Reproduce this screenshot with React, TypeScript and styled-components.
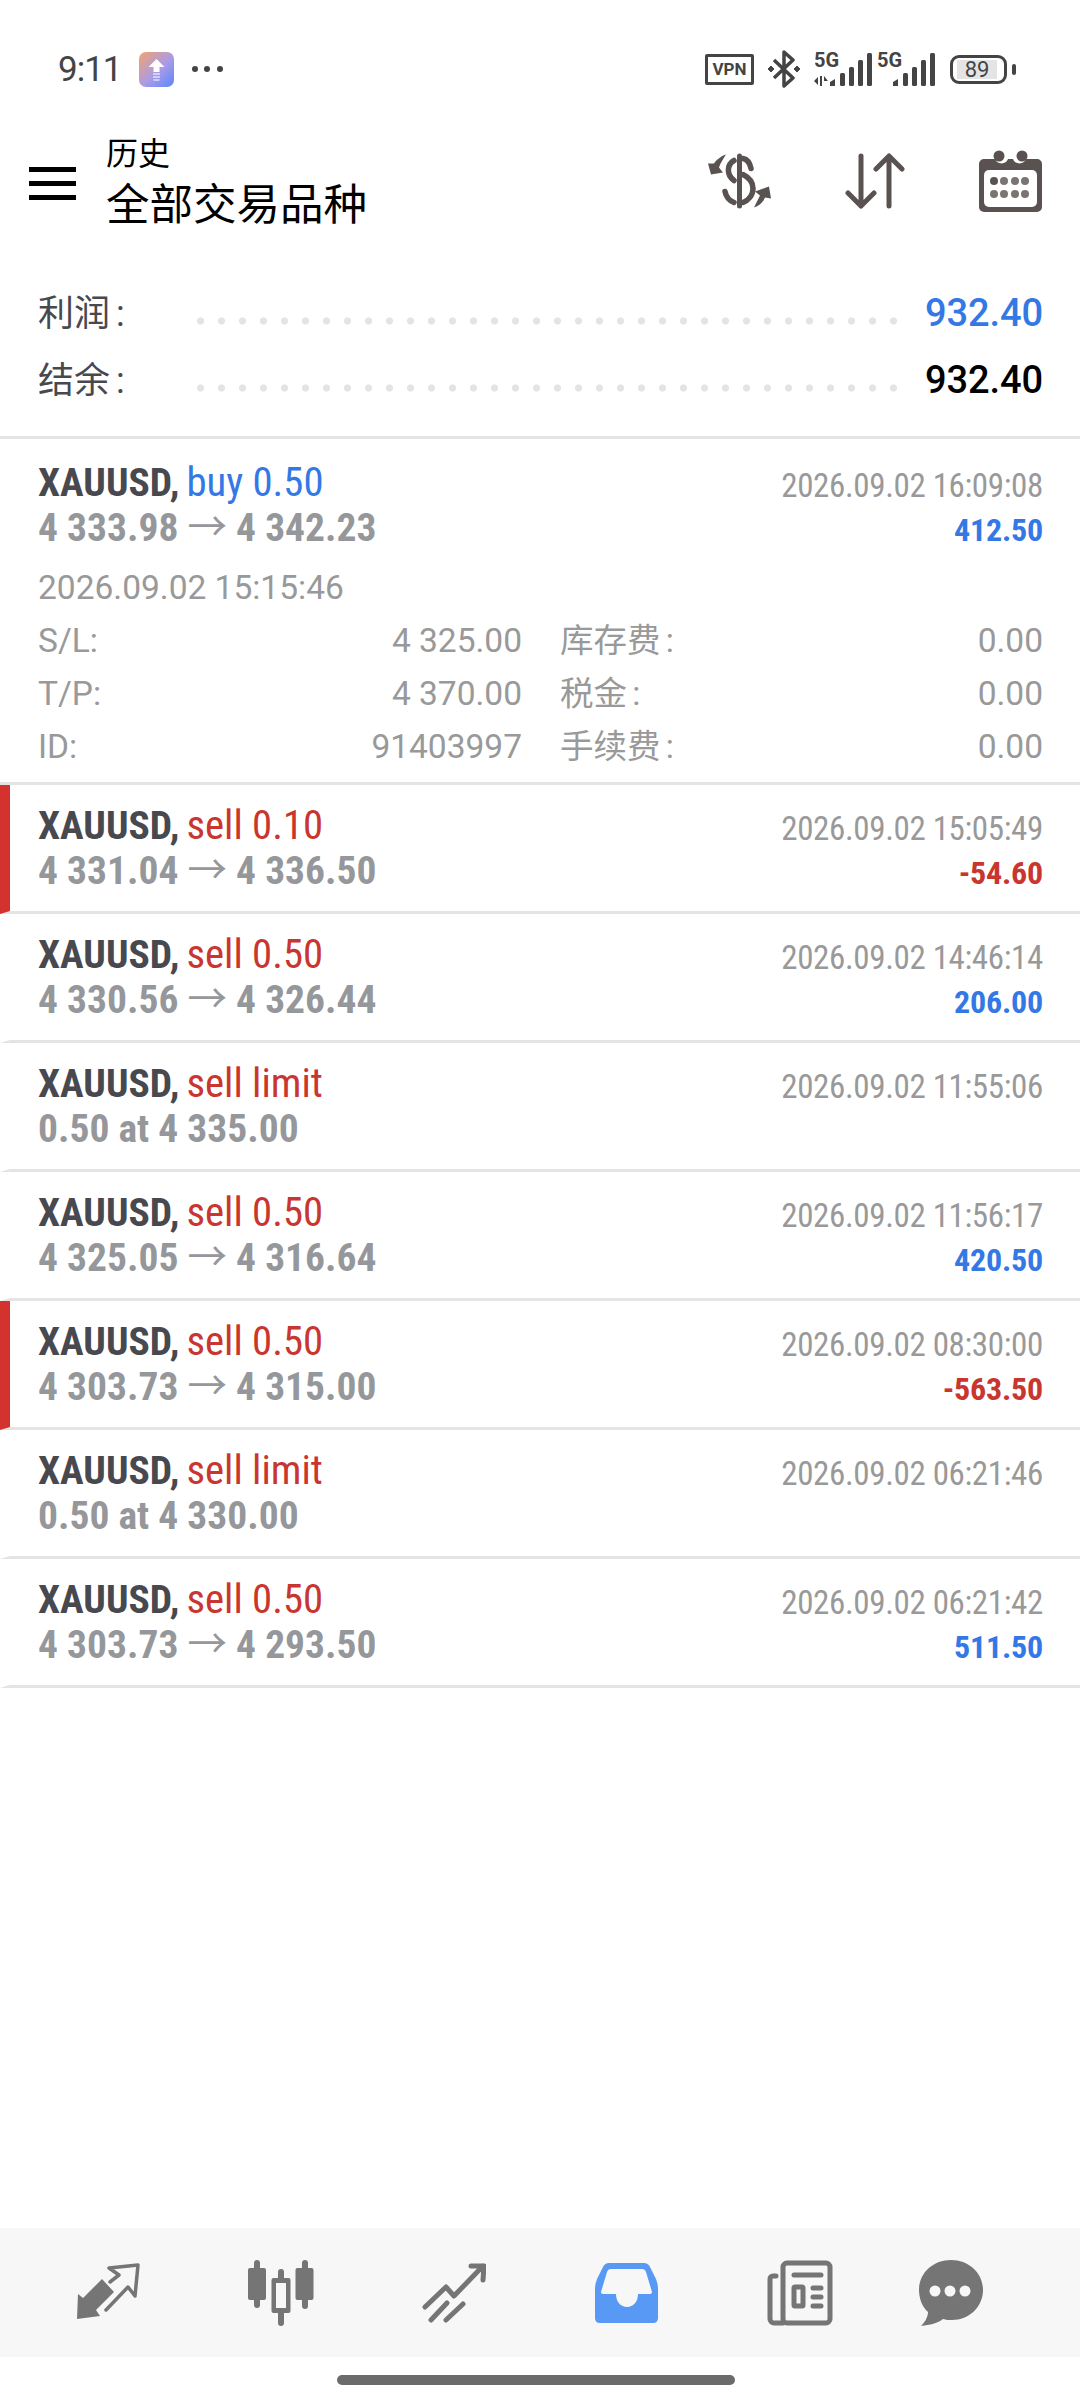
import React from "react";
import styled, { createGlobalStyle } from "styled-components";

const GlobalStyle = createGlobalStyle`
  html, body { margin: 0; padding: 0; background: #fff; }
  body { font-family: Roboto, "Noto Sans CJK SC", sans-serif; }
`;

const narrow = `"Roboto Condensed", "Liberation Sans Narrow", Roboto, "Noto Sans CJK SC", sans-serif`;

const Page = styled.div`
  width: 1080px;
  height: 2400px;
  display: flex;
  flex-direction: column;
  overflow: hidden;
  background: #fff;
`;

const StatusBar = styled.div`
  height: 110px;
  box-sizing: border-box;
  padding: 28px 64px 0 58px;
  display: flex;
  align-items: center;
  justify-content: space-between;
  color: #444;
`;

const StatusLeft = styled.div`
  display: flex;
  align-items: center;
  gap: 17px;
`;

const Time = styled.span`
  font-size: 35px;
  letter-spacing: -1px;
  color: #444;
`;

const StatusRight = styled.div`
  display: flex;
  align-items: center;
  gap: 13px;
`;

const VpnBox = styled.span`
  width: 49px;
  height: 31px;
  box-sizing: border-box;
  border: 3px solid #444;
  border-radius: 2px;
  font-size: 17px;
  font-weight: 700;
  line-height: 25px;
  text-align: center;
`;

const Signal = styled.span`
  position: relative;
  display: block;
  width: 60px;
  height: 33px;
  & + & {
    margin-left: -10px;
  }
`;

const FiveG = styled.span`
  position: absolute;
  left: 0;
  top: -4px;
  font-size: 20px;
  font-weight: 700;
  line-height: 22px;
`;

const Battery = styled.span`
  width: 57px;
  height: 29px;
  box-sizing: border-box;
  border: 3px solid #444;
  border-radius: 9px;
  padding: 2px 7px 2px 4px;
  display: flex;
`;

const BatteryFill = styled.span`
  flex: 1;
  background: #e4e4e4;
  font-size: 22px;
  line-height: 19px;
  text-align: center;
`;

const BatteryNub = styled.span`
  width: 4px;
  height: 11px;
  margin-left: -8px;
  border-radius: 2px;
  background: #444;
`;

const Header = styled.div`
  height: 160px;
  box-sizing: border-box;
  padding: 24px 38px 0 29px;
  display: flex;
  align-items: flex-start;
`;

const Burger = styled.div`
  width: 47px;
  margin-top: 33px;
  display: flex;
  flex-direction: column;
  gap: 9px;
  span {
    height: 5px;
    background: #000;
  }
`;

const Titles = styled.div`
  margin-left: 30px;
  flex: 1;
  color: #000;
`;

const SubTitle = styled.div`
  font-size: 32px;
  line-height: 40px;
`;

const MainTitle = styled.div`
  font-size: 43.5px;
  line-height: 58px;
  margin-top: 3px;
`;

const HeaderIcons = styled.div`
  display: flex;
  align-items: center;
  margin-top: 16px;
  gap: 74px;
`;

const Summary = styled.div`
  padding: 9px 37px 23px 38px;
  border-bottom: 3px solid #e4e4e4;
`;

const SummaryRow = styled.div`
  height: 67px;
  display: flex;
  align-items: center;
`;

const SummaryLabel = styled.span`
  width: 152px;
  margin-bottom: 5px;
  font-size: 36px;
  word-spacing: -3px;
  color: #48484f;
`;

const Leader = styled.span`
  flex: 1;
  height: 14px;
  margin: 16px 19px 0 0;
  background: radial-gradient(circle, #e4e4e4 3.2px, transparent 4px) left center / 21px 14px repeat-x;
`;

const SummaryValue = styled.span<{ $blue?: boolean }>`
  font-size: 38px;
  font-weight: 500;
  letter-spacing: -0.1px;
  color: ${(p) => (p.$blue ? "#3478e5" : "#000")};
`;

const Row = styled.div<{ $loss?: boolean }>`
  height: 129px;
  box-sizing: border-box;
  border-bottom: 3px solid #e4e4e4;
  border-left: 10px solid ${(p) => (p.$loss ? "#d3322e" : "transparent")};
  padding: 20px 37px 0 28px;
  display: flex;
  justify-content: space-between;
`;

const ExpandedRow = styled.div`
  height: 346px;
  box-sizing: border-box;
  border-bottom: 3px solid #e4e4e4;
  padding: 23px 37px 0 38px;
`;

const RowTop = styled.div`
  display: flex;
  justify-content: space-between;
  height: 90px;
`;

const RowLeft = styled.div`
  margin-top: -3px;
  font-family: ${narrow};
  font-stretch: 75%;
`;

const TitleLine = styled.div`
  font-size: 39.5px;
  line-height: 46px;
  white-space: nowrap;
`;

const Symbol = styled.span`
  font-weight: 700;
  color: #48484f;
`;

const Side = styled.span<{ $buy?: boolean }>`
  margin-left: -2px;
  font-size: 40.7px;
  color: ${(p) => (p.$buy ? "#3478e5" : "#c9352f")};
`;

const PriceLine = styled.div`
  font-size: 39.5px;
  line-height: 44px;
  font-weight: 700;
  color: #95979b;
  white-space: nowrap;
`;

const Arrow = styled.span`
  font-weight: 400;
`;

const RowRight = styled.div`
  font-family: ${narrow};
  font-stretch: 75%;
  text-align: right;
`;

const CloseTime = styled.div`
  padding-top: 1px;
  font-size: 33px;
  line-height: 45px;
  letter-spacing: -0.35px;
  color: #999;
  white-space: nowrap;
`;

const Profit = styled.div<{ $loss?: boolean }>`
  font-size: 32px;
  line-height: 44px;
  letter-spacing: -0.2px;
  font-weight: 700;
  color: ${(p) => (p.$loss ? "#c9352f" : "#3478e5")};
`;

const OpenTime = styled.div`
  font-size: 33.5px;
  line-height: 40px;
  margin-top: 16px;
  color: #999;
`;

const Details = styled.div`
  margin-top: 6px;
  display: grid;
  grid-template-columns: 484px 1fr;
  column-gap: 38px;
  grid-auto-rows: 53px;
  align-items: center;
  font-size: 33.5px;
  color: #999;
`;

const DetailCell = styled.div`
  display: flex;
  justify-content: space-between;
  align-items: baseline;
  line-height: 46px;
`;

const FeeLabel = styled.span`
  word-spacing: -3px;
`;

const List = styled.div`
  flex: 1;
`;

const BottomNav = styled.div`
  height: 129px;
  box-sizing: border-box;
  padding-left: 21px;
  background: #f7f7f7;
  display: grid;
  grid-template-columns: repeat(5, 173px) 130px;
  align-items: center;
  justify-items: center;
`;

const HomeBar = styled.div`
  height: 10px;
  width: 398px;
  margin: 18px 0 15px 337px;
  border-radius: 5px;
  background: #6b6b6b;
`;

type Trade = {
  side: string;
  prices: string;
  time: string;
  profit?: string;
  loss?: boolean;
  bar?: boolean;
};

const trades: Trade[] = [
  { side: "sell 0.10", prices: "4 331.04|4 336.50", time: "2026.09.02 15:05:49", profit: "-54.60", loss: true, bar: true },
  { side: "sell 0.50", prices: "4 330.56|4 326.44", time: "2026.09.02 14:46:14", profit: "206.00" },
  { side: "sell limit", prices: "0.50 at 4 335.00", time: "2026.09.02 11:55:06" },
  { side: "sell 0.50", prices: "4 325.05|4 316.64", time: "2026.09.02 11:56:17", profit: "420.50" },
  { side: "sell 0.50", prices: "4 303.73|4 315.00", time: "2026.09.02 08:30:00", profit: "-563.50", loss: true, bar: true },
  { side: "sell limit", prices: "0.50 at 4 330.00", time: "2026.09.02 06:21:46" },
  { side: "sell 0.50", prices: "4 303.73|4 293.50", time: "2026.09.02 06:21:42", profit: "511.50" },
];

function Prices({ value }: { value: string }) {
  const [from, to] = value.split("|");
  if (!to) return <PriceLine>{from}</PriceLine>;
  return (
    <PriceLine>
      {from} <Arrow>→</Arrow> {to}
    </PriceLine>
  );
}

const DollarIcon = () => (
  <svg width="63" height="56" viewBox="0 0 63 55">
    <rect x="29" y="0" width="5" height="55" rx="2.5" fill="#5a5250" />
    <g fill="none" stroke="#5a5250" strokeWidth="5.5" strokeLinecap="round">
      <path d="M26 7C19 11 18 21 26 27" />
      <path d="M35 5C40 6 42 10 43 15" />
      <path d="M35 21C43 25 45 30 45 35C45 42 40 47 35 49" />
      <path d="M17 38C18 43 21 47 26 49" />
    </g>
    <path d="M18 1C12 3 8 7 6 10L0 10L3 21L15 19L11 14C12 10 15 6 18 1Z" fill="#5a5250" />
    <path d="M46 54C51 53 55 49 57 44L63 45L61 33L47 38L52 42C50 46 48 50 46 54Z" fill="#5a5250" />
  </svg>
);

const SwapIcon = () => (
  <svg width="60" height="56" viewBox="0 0 60 56" fill="none" stroke="#5a5250" strokeWidth="5" strokeLinecap="round" strokeLinejoin="round">
    <path d="M16 3v50M3 40l13 13 13-13M44 53V3M31 16L44 3l13 13" />
  </svg>
);

const CalendarIcon = () => (
  <svg width="63" height="62" viewBox="0 0 63 62" fill="#5a5250">
    <path d="M5 9h11a7 7 0 0 0 13 0h5a7 7 0 0 0 13 0h11a5 5 0 0 1 5 5v43a5 5 0 0 1-5 5H5a5 5 0 0 1-5-5V14a5 5 0 0 1 5-5z" />
    <circle cx="20" cy="6" r="5.5" />
    <circle cx="43" cy="6" r="5.5" />
    <rect x="5" y="20" width="53" height="37" rx="5" fill="#fff" />
    <circle cx="15" cy="31" r="4" />
    <g fill="#7b7472">
      <circle cx="25" cy="31" r="4" />
      <circle cx="36" cy="31" r="4" />
      <circle cx="46" cy="31" r="4" />
      <circle cx="15" cy="44" r="4" />
      <circle cx="25" cy="44" r="4" />
      <circle cx="36" cy="44" r="4" />
      <circle cx="46" cy="44" r="4" />
    </g>
  </svg>
);

const TradeIcon = () => (
  <svg width="64" height="60" viewBox="0 0 64 60">
    <path d="M2 31l5 4 19-19 12 13-18 18 4 6-23 3z" fill="#757575" />
    <path d="M34 19l9-7-10-7 29-3-3 31-7-9-22 23" fill="none" stroke="#757575" strokeWidth="3.5" strokeLinejoin="round" strokeLinecap="round" />
  </svg>
);

const CandleIcon = () => (
  <svg width="66" height="66" viewBox="0 0 66 66" fill="#757575">
    <rect x="6" y="0" width="6" height="48" rx="3" />
    <rect x="0" y="8" width="18" height="32" rx="2" />
    <rect x="30" y="9" width="6" height="57" rx="3" />
    <rect x="23.5" y="18" width="19" height="35" rx="2" />
    <rect x="28" y="23" width="10" height="25" fill="#f7f7f7" />
    <rect x="54" y="0" width="6" height="49" rx="3" />
    <rect x="47.5" y="8" width="18" height="32" rx="2" />
  </svg>
);

const ChartIcon = () => (
  <svg width="64" height="60" viewBox="0 0 64 60" fill="none" stroke="#757575" strokeWidth="5" strokeLinecap="round" strokeLinejoin="round">
    <path d="M3 44l21-20 8 9 29-30M49 3h13l-1 14M9 57l16-17M24 57l17-16" />
  </svg>
);

const InboxIcon = () => (
  <svg width="63" height="60" viewBox="0 0 63 60">
    <path d="M14 0h35q4 0 6 4l6 12q2 5 2 10v29q0 5-5 5H5q-5 0-5-5V26q0-5 2-10L8 4q2-4 6-4z" fill="#5899f5" />
    <path d="M16 6h31q3 0 4 3l6 20q0 2-3 2H43c0 8-5 13-11 13s-11-5-11-13H9q-3 0-3-2l6-20q1-3 4-3z" fill="#f7f7f7" />
  </svg>
);

const NewsIcon = () => (
  <svg width="66" height="66" viewBox="0 0 66 66" fill="none" stroke="#757575" strokeWidth="5" strokeLinecap="round" strokeLinejoin="round">
    <rect x="16" y="3" width="47" height="60" rx="4" />
    <path d="M9 16H6a3 3 0 0 0-3 3v40a4 4 0 0 0 4 4h9" />
    <path d="M27 15h27M46 28h8M46 37h8M46 46h8" />
    <rect x="27" y="27" width="9" height="19" rx="1" />
  </svg>
);

const ChatIcon = () => (
  <svg width="64" height="66" viewBox="0 0 64 66">
    <path d="M32 0c18 0 32 13 32 30S50 60 33 60c-3 0-6 0-9-1-5 4-13 6-22 7 4-4 7-9 7-14C3 47 0 38 0 30 0 13 14 0 32 0z" fill="#757575" />
    <circle cx="16" cy="31" r="5.5" fill="#f7f7f7" />
    <circle cx="31" cy="31" r="5.5" fill="#f7f7f7" />
    <circle cx="46" cy="31" r="5.5" fill="#f7f7f7" />
  </svg>
);

const AppBadge = () => (
  <svg width="35" height="35" viewBox="0 0 35 35">
    <defs>
      <linearGradient id="badge" x1="0" y1="0" x2="1" y2="1">
        <stop offset="0" stopColor="#f3a36b" />
        <stop offset="0.55" stopColor="#a99be8" />
        <stop offset="1" stopColor="#5a86fb" />
      </linearGradient>
    </defs>
    <rect width="35" height="35" rx="7" fill="url(#badge)" />
    <path d="M17.5 7l8 8h-5v5h-6v-5h-5z" fill="#fff" />
    <path d="M14 22h7M14 25h7M14.500 28h6" stroke="#fff" strokeOpacity="0.7" strokeWidth="1.600" />
  </svg>
);

const MoreDots = () => (
  <svg width="33" height="8" viewBox="0 0 33 8" fill="#444">
    <circle cx="4" cy="4" r="3" />
    <circle cx="16" cy="4" r="3" />
    <circle cx="29" cy="4" r="3" />
  </svg>
);

const BluetoothIcon = () => (
  <svg width="34" height="38" viewBox="0 0 34 38" fill="none" stroke="#444" strokeWidth="3.5" strokeLinejoin="round">
    <path d="M7 10l19 18-9 8V2l9 8L7 28" />
    <path d="M1 19l3-3 3 3-3 3zM27 19l3-3 3 3-3 3z" fill="#444" strokeWidth="1" />
  </svg>
);

const SignalBars = ({ arrows }: { arrows?: boolean }) => (
  <svg width="60" height="33" viewBox="0 0 60 33" fill="#444" style={{ position: "absolute", left: 0, top: 0 }}>
    {arrows && <path d="M0 28l4-4v8zM6 23h2v10H6zM10 23l4 5h-4z" />}
    <path d="M16 33v-4l5-3v7z" />
    <rect x="26" y="20" width="5" height="13" rx="1.500" />
    <rect x="35" y="14" width="5" height="19" rx="1.500" />
    <rect x="44" y="7" width="5" height="26" rx="1.500" />
    <rect x="53" y="0" width="5" height="33" rx="1.500" />
  </svg>
);

export default function App() {
  return (
    <Page>
      <GlobalStyle />
      <StatusBar>
        <StatusLeft>
          <Time>9:11</Time>
          <AppBadge />
          <MoreDots />
        </StatusLeft>
        <StatusRight>
          <VpnBox>VPN</VpnBox>
          <BluetoothIcon />
          <Signal>
            <SignalBars arrows />
            <FiveG>5G</FiveG>
          </Signal>
          <Signal>
            <SignalBars />
            <FiveG>5G</FiveG>
          </Signal>
          <Battery>
            <BatteryFill>89</BatteryFill>
          </Battery>
          <BatteryNub />
        </StatusRight>
      </StatusBar>

      <Header>
        <Burger>
          <span />
          <span />
          <span />
        </Burger>
        <Titles>
          <SubTitle>历史</SubTitle>
          <MainTitle>全部交易品种</MainTitle>
        </Titles>
        <HeaderIcons>
          <DollarIcon />
          <SwapIcon />
          <CalendarIcon />
        </HeaderIcons>
      </Header>

      <Summary>
        <SummaryRow>
          <SummaryLabel>利润 :</SummaryLabel>
          <Leader />
          <SummaryValue $blue>932.40</SummaryValue>
        </SummaryRow>
        <SummaryRow>
          <SummaryLabel>结余 :</SummaryLabel>
          <Leader />
          <SummaryValue>932.40</SummaryValue>
        </SummaryRow>
      </Summary>

      <List>
        <ExpandedRow>
          <RowTop>
            <RowLeft>
              <TitleLine>
                <Symbol>XAUUSD,</Symbol> <Side $buy>buy 0.50</Side>
              </TitleLine>
              <Prices value="4 333.98|4 342.23" />
            </RowLeft>
            <RowRight>
              <CloseTime>2026.09.02 16:09:08</CloseTime>
              <Profit>412.50</Profit>
            </RowRight>
          </RowTop>
          <OpenTime>2026.09.02 15:15:46</OpenTime>
          <Details>
            <DetailCell>
              <span>S/L:</span>
              <span>4 325.00</span>
            </DetailCell>
            <DetailCell>
              <FeeLabel>库存费 :</FeeLabel>
              <span>0.00</span>
            </DetailCell>
            <DetailCell>
              <span>T/P:</span>
              <span>4 370.00</span>
            </DetailCell>
            <DetailCell>
              <FeeLabel>税金 :</FeeLabel>
              <span>0.00</span>
            </DetailCell>
            <DetailCell>
              <span>ID:</span>
              <span>91403997</span>
            </DetailCell>
            <DetailCell>
              <FeeLabel>手续费 :</FeeLabel>
              <span>0.00</span>
            </DetailCell>
          </Details>
        </ExpandedRow>
        {trades.map((t) => (
          <Row key={t.time} $loss={t.bar}>
            <RowLeft>
              <TitleLine>
                <Symbol>XAUUSD,</Symbol> <Side>{t.side}</Side>
              </TitleLine>
              <Prices value={t.prices} />
            </RowLeft>
            <RowRight>
              <CloseTime>{t.time}</CloseTime>
              {t.profit && <Profit $loss={t.loss}>{t.profit}</Profit>}
            </RowRight>
          </Row>
        ))}
      </List>

      <BottomNav>
        <TradeIcon />
        <CandleIcon />
        <ChartIcon />
        <InboxIcon />
        <NewsIcon />
        <ChatIcon />
      </BottomNav>
      <HomeBar />
    </Page>
  );
}
